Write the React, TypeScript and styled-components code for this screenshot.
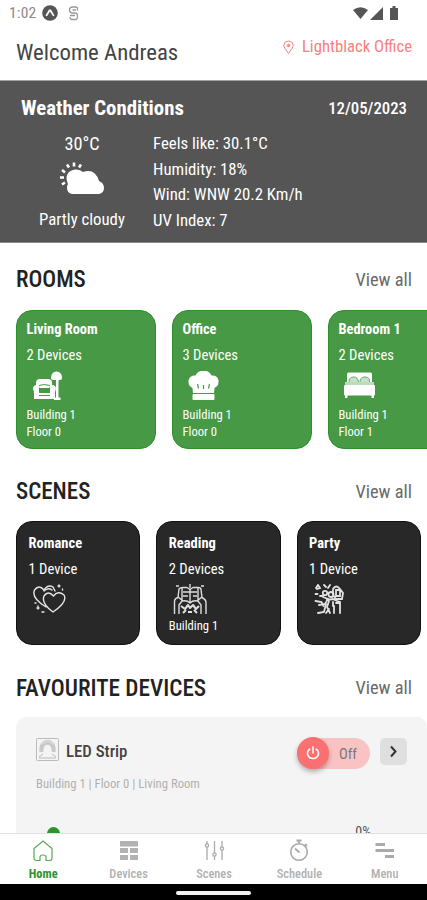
import React from 'react';
import styled, { createGlobalStyle } from 'styled-components';

const Global = createGlobalStyle`
  * { box-sizing: border-box; }
  html, body { margin: 0; padding: 0; background: #fff; overflow: hidden; }
  body { font-family: 'Roboto Condensed', Roboto, 'Liberation Sans', sans-serif; font-stretch: 75%; }
  svg { display: block; flex: none; }
`;

const Screen = styled.div`
  width: 427px;
  height: 900px;
  overflow: hidden;
  display: flex;
  flex-direction: column;
  background: #fff;
`;

type TextProps = { $size: number; $line: number; $weight?: number; $color?: string; $track?: number };

const Text = styled.span<TextProps>`
  display: block;
  white-space: nowrap;
  font-size: ${p => p.$size}px;
  line-height: ${p => p.$line}px;
  font-weight: ${p => p.$weight ?? 400};
  color: ${p => p.$color ?? '#fff'};
  letter-spacing: ${p => p.$track ?? 0}px;
`;

const StatusBar = styled.div`
  height: 26px;
  flex: none;
  display: flex;
  align-items: center;
  padding: 0 28px 0 9px;
`;

const StatusGroup = styled.div`
  display: flex;
  align-items: center;
  margin-left: auto;
`;

const AppDot = styled.div`
  margin: 0 10px 0 6px;
`;

const Header = styled.header`
  height: 55px;
  flex: none;
  display: flex;
  justify-content: space-between;
  align-items: flex-start;
  padding: 13px 15px 0 16px;
  border-bottom: 1px solid #a2a2a2;
`;

const Location = styled.div`
  display: flex;
  align-items: center;
  gap: 8px;
  margin-top: -2px;
`;

const Weather = styled.section`
  height: 162px;
  flex: none;
  background: #555;
  border-bottom: 1px solid #8d8d8d;
  padding: 13px 20px 0 21px;
`;

const WeatherTop = styled.div`
  display: flex;
  justify-content: space-between;
  align-items: center;
  height: 27px;
`;

const WeatherBody = styled.div`
  display: flex;
  padding-top: 10px;
`;

const Sky = styled.div`
  width: 122px;
  display: flex;
  flex-direction: column;
  align-items: center;
`;

const SkyIcon = styled.div`
  height: 49px;
  padding-top: 5px;
`;

const Readings = styled.div`
  padding-left: 10px;
`;

const Body = styled.main`
  flex: 1;
  min-height: 0;
  overflow: hidden;
`;

const SectionHead = styled.div<{ $height: number; $top: number }>`
  height: ${p => p.$height}px;
  display: flex;
  justify-content: space-between;
  align-items: center;
  padding: ${p => p.$top}px 15px 0 16px;
`;

const Cards = styled.div`
  display: flex;
  gap: 16px;
  padding-left: 16px;
`;

const RoomCard = styled.article`
  flex: none;
  width: 140px;
  height: 139px;
  padding: 9px 9.5px 0;
  border-radius: 16px;
  background: #489945;
  border: 1px solid #2c8f29;
`;

const SceneCard = styled.article`
  flex: none;
  width: 124.3px;
  height: 124px;
  padding: 12px 11.5px 0;
  border-radius: 16px;
  background: #282828;
  border: 1px solid #111;
`;

const IconSlot = styled.div<{ $height: number }>`
  height: ${p => p.$height}px;
  padding-left: 4px;
`;

const DeviceCard = styled.article`
  margin-left: 16px;
  height: 140px;
  background: #f4f4f4;
  border-radius: 10px;
  padding: 20px 20px 0;
`;

const DeviceRow = styled.div`
  display: flex;
  align-items: center;
  height: 32px;
`;

const DeviceName = styled.div`
  display: flex;
  align-items: center;
  gap: 7px;
  flex: 1;
  padding-bottom: 8px;
`;

const DeviceTitle = styled(Text)`
  padding-top: 3px;
`;

const Toggle = styled.div`
  width: 73px;
  height: 31px;
  border-radius: 16px;
  background: #f9c3c3;
  display: flex;
  align-items: center;
  gap: 10px;
`;

const ToggleLabel = styled(Text)`
  padding-top: 3px;
`;

const Knob = styled.div`
  width: 32px;
  height: 32px;
  border-radius: 50%;
  background: #fb7070;
  display: flex;
  align-items: center;
  justify-content: center;
  box-shadow: 0 3px 5px rgba(0, 0, 0, 0.28);
`;

const Arrow = styled.div`
  width: 27px;
  height: 27px;
  margin: 0 0 4px 10px;
  border-radius: 5px;
  background: #dfdfdf;
  display: flex;
  align-items: center;
  justify-content: center;
`;

const SliderRow = styled.div`
  display: flex;
  justify-content: space-between;
  padding: 26px 36px 0 11px;
`;

const SliderThumb = styled.div`
  width: 13px;
  height: 13px;
  margin-top: 3px;
  border-radius: 50%;
  background: #2f922f;
`;

const Nav = styled.nav`
  height: 51px;
  flex: none;
  display: grid;
  grid-template-columns: repeat(5, 1fr);
  background: #fff;
  border-top: 1px solid #e2e2e2;
`;

const NavItem = styled.div`
  display: flex;
  flex-direction: column;
  align-items: center;
  padding: 5px 0 0 1px;
  gap: 4px;
`;

const SystemBar = styled.div`
  height: 16px;
  flex: none;
  display: flex;
  justify-content: center;
  align-items: center;
  padding-top: 2px;
  background: #000;
`;

const HomePill = styled.div`
  width: 75px;
  height: 4px;
  border-radius: 2px;
  background: #f2f2f2;
`;

const Armchair = () => (
  <svg width="34" height="32" viewBox="0 0 34 32" fill="#fff">
    <path d="M5 12q0-4 4-4h8q4 0 4 4v3l-3 2H8l-3-2z" />
    <path d="M2 18q0-4 4-4 2 0 2.500 3v5h10v-5q.5-3 2.500-3 4 0 4 4-1 2-1 4v6H3v-6q0-2-1-4z" />
    <path d="M20 7q0-6 5.500-6.500Q31 1 31 7q0 2-2 2h-7q-2 0-2-2zM25 9h2.500v17.500h2V29H23v-2.500h2z" />
    <path d="M8 14.500q5-2 11 0M8.500 16.500v5h10v-5M8 24.500h11" stroke="#489945" fill="none" />
  </svg>
);

const ChefHat = () => (
  <svg width="34" height="32" viewBox="0 0 34 32" fill="#fff">
    <path d="M6 22l-.5-5Q1 15 1.500 9.500 3 4 8.500 4.500q2-5 8-5t8 5q6-.5 7 5 .5 5.500-4 7.500l-.5 5z" />
    <rect x="5.500" y="23" width="22" height="6" rx="1" />
    <path d="M10.500 13l1 4.500M16.500 14v4M22.500 13l-1 4.500" stroke="#489945" strokeWidth="1.200" />
  </svg>
);

const Bed = () => (
  <svg width="34" height="32" viewBox="0 0 34 32" fill="#fff">
    <path d="M4 3q0-1.500 1.500-1.500h22Q29 1.500 29 3v9H4z" />
    <path d="M6 11q0-5 4.500-5t5 5M17 11q0-5 5-5t4.500 5" fill="#c9e0c8" stroke="#6aac68" />
    <rect x="2" y="11" width="29" height="3" fill="#bddabc" />
    <rect x="1" y="14" width="31" height="10.500" rx="1" />
    <path d="M2 24h2.500v3H2zM28.500 24H31v3h-2.500z" />
  </svg>
);

const Hearts = () => (
  <svg width="34" height="32" viewBox="0 0 34 32" fill="none" stroke="#e6e6e6" strokeWidth="1.400" strokeLinecap="round">
    <path d="M20 28Q8 19 11 12q4-6 9.500 0Q25 6 31 11q4 7-11 17z" />
    <path d="M13 23Q-2 14 1.500 6 6 0 11 6q4-6 9-3l2 4" />
    <path d="M11 7q4-4 8-1" />
    <path d="M26 1v2M25 2h2M29.500 5v1M5 22v3M4 24h2M9 28h2M2 19h1" />
  </svg>
);

const ReadingIcon = () => (
  <svg width="34" height="32" viewBox="0 0 34 32" fill="none" stroke="#dedede" strokeWidth="1.400" strokeLinejoin="round">
    <path d="M1.500 30V17.500q0-3 3.500-4L6 5q1-1.500 4-1.500h4l3 2 3-2h5q3 0 3 2l1 8q4 2 4 5V30" />
    <path d="M6 30v-9l3-4M28 30v-9l-3-4M9 4v13q5-1 8 2 3-3 8-2V4M17 5v14M5 13l5 4M29 13l-5 4" />
    <path d="M10 8h14M10 12h5M20 12h4M3 2h3M28 2h3M17 0v4" />
    <path d="M8 22l4 3 3-4 2 3 3-3 3 4 3-3M10 29l3-3M24 29l-3-3M15 28h4" strokeWidth="2.100" />
  </svg>
);

const PartyIcon = () => (
  <svg width="34" height="32" viewBox="0 0 34 32" fill="none" stroke="#e2e2e2" strokeWidth="1.800" strokeLinecap="round">
    <path d="M3 4l2-3 2 3-3 1zM2.500 10h2M11 1l2 2M17 1l-2 3M2.500 17l6 1 2 4M10 13l5 2-3 5-6 1M5 29l6-1 2-8M7 12h3" />
    <circle cx="12" cy="9" r="2.200" />
    <circle cx="18" cy="10.500" r="2.500" />
    <path d="M20 5q3-5 7 0l3 4-1 6h-6l-3-4zM23 6h4v6h-4zM14 16l6-1 4 2 3 1v11M16 17l-2 6 3 6M20 18v4M21 22v7M23 19h3M13 29l3-4" />
  </svg>
);

const rooms = [
  { name: 'Living Room', count: '2 Devices', building: 'Building 1', floor: 'Floor 0', Icon: Armchair },
  { name: 'Office', count: '3 Devices', building: 'Building 1', floor: 'Floor 0', Icon: ChefHat },
  { name: 'Bedroom 1', count: '2 Devices', building: 'Building 1', floor: 'Floor 1', Icon: Bed },
];

const scenes = [
  { name: 'Romance', count: '1 Device', building: '', Icon: Hearts },
  { name: 'Reading', count: '2 Devices', building: 'Building 1', Icon: ReadingIcon },
  { name: 'Party', count: '1 Device', building: '', Icon: PartyIcon },
];

const NavIcon = ({ children }: { children: React.ReactNode }) => (
  <svg width="24" height="24" viewBox="0 0 24 24" fill="none" stroke="#aaa" strokeWidth="1.300">{children}</svg>
);

const tabs = [
  {
    label: 'Home', active: true,
    icon: <path d="M9 21.500H5.500q-2.500 0-2.500-2.500V9.500L12 2l9 7.500V19q0 2.500-2.500 2.500H15V18q0-2-3-2t-3 2z" stroke="#5ba659" strokeWidth="1.200" />,
  },
  {
    label: 'Devices', active: false,
    icon: <path d="M3 2h18v5.500H3zM3 9h8v5H3zM13 9h8v5h-8zM3 16h8v5H3zM13 16h8v5h-8z" fill="#b2b2b2" stroke="none" />,
  },
  {
    label: 'Scenes', active: false,
    icon: <><path d="M5 2v3M5 8v13M12.500 2v12M12.500 17v4M20 2v6M20 11v10" /><circle cx="5" cy="6.500" r="1.600" /><circle cx="12.500" cy="15.500" r="1.600" /><circle cx="20" cy="9.500" r="1.600" /></>,
  },
  {
    label: 'Schedule', active: false,
    icon: <><circle cx="12" cy="13" r="8.300" strokeWidth="1.600" /><path d="M9.500 1.500h5M12 2v3M18 5l2 2M8 9.500l4.500 4" strokeWidth="1.800" /></>,
  },
  {
    label: 'Menu', active: false,
    icon: <path d="M2.500 5.500H12M2.500 11.500H21M12 17.500h9" strokeWidth="3" />,
  },
];

export default function App() {
  return (
    <Screen>
      <Global />
      <StatusBar>
        <Text $size={15.5} $line={24} $color="#8a8a8a" $track={0.2}>1:02</Text>
        <AppDot>
          <svg width="16" height="16" viewBox="0 0 16 16">
            <circle cx="8" cy="8" r="7.800" fill="#555" />
            <path d="M3.500 10.500q1 1.500 2 0L8 6.500l2.500 4q1 1.500 2 0L9 4.500H7z" fill="#fff" />
          </svg>
        </AppDot>
        <svg width="11" height="15" viewBox="0 0 11 15" fill="none" stroke="#999" strokeWidth="1.300">
          <path d="M9.500 4.500V2.500q0-1.500-2-1.500H4Q1.500 1.500 1.500 4T4 7h3q2.500 0 2.500 3.500T6.500 13.500H4q-2 0-2-2.500M4.500 4H8M2 9.500h5" />
        </svg>
        <StatusGroup>
          <svg width="17" height="13" viewBox="0 0 17 13"><path d="M0 3q7.500-5.500 15 0L7.500 12z" fill="#555" /></svg>
          <svg width="20" height="13" viewBox="0 0 20 13"><path d="M13 0v13H0z" fill="#555" /></svg>
          <svg width="9" height="14" viewBox="0 0 9 14"><path d="M0 2h2.500V0h3v2H8v12H0z" fill="#555" /></svg>
        </StatusGroup>
      </StatusBar>

      <Header>
        <Text $size={22.8} $line={28} $color="#444">Welcome Andreas</Text>
        <Location>
          <svg width="11" height="15" viewBox="0 0 11 15" fill="none" stroke="#f98080">
            <path d="M5.500 13.500L2 8.500Q.5 6 .8 5 1.500 1 5.500 1t4.700 4q.3 1-1.200 3.500z" />
            <circle cx="5.500" cy="5.500" r="1.200" fill="#f98080" />
          </svg>
          <Text $size={16.7} $line={20} $color="#f98080">Lightblack Office</Text>
        </Location>
      </Header>

      <Weather>
        <WeatherTop>
          <Text $size={20.8} $line={26} $weight={700}>Weather Conditions</Text>
          <Text $size={16.8} $line={24} $weight={500}>12/05/2023</Text>
        </WeatherTop>
        <WeatherBody>
          <Sky>
            <Text $size={18.3} $line={26}>30°C</Text>
            <SkyIcon>
              <svg width="44" height="34" viewBox="0 0 44 34">
                <path d="M12 32q-5-1-5-6 0-3 1-4Q3 10 15 7.500q5-.5 8 2.500 12-4 16 9 5 2 5 7 0 5-5 6z" fill="#fff" />
                <path d="M14 .5v4M7 2.500l2 3M21 2.500l-2 3M2 8l3 2.500M0 15.500h4M2 22.500l3-2" stroke="#fff" strokeWidth="2.600" />
              </svg>
            </SkyIcon>
            <Text $size={16.8} $line={26}>Partly cloudy</Text>
          </Sky>
          <Readings>
            <Text $size={16.8} $line={25.5}>Feels like: 30.1°C</Text>
            <Text $size={16.8} $line={25.5}>Humidity: 18%</Text>
            <Text $size={16.8} $line={25.5}>Wind: WNW 20.2 Km/h</Text>
            <Text $size={16.8} $line={25.5}>UV Index: 7</Text>
          </Readings>
        </WeatherBody>
      </Weather>

      <Body>
        <SectionHead $height={67} $top={7}>
          <Text $size={23} $line={28} $weight={500} $color="#222">ROOMS</Text>
          <Text $size={18.4} $line={26} $color="#6a6a6a">View all</Text>
        </SectionHead>
        <Cards>
          {rooms.map(({ name, count, building, floor, Icon }) => (
            <RoomCard key={name}>
              <Text $size={14.4} $line={20} $weight={700}>{name}</Text>
              <Text $size={14.6} $line={31}>{count}</Text>
              <IconSlot $height={34.5}><Icon /></IconSlot>
              <Text $size={12.6} $line={17}>{building}</Text>
              <Text $size={12.6} $line={17}>{floor}</Text>
            </RoomCard>
          ))}
        </Cards>
        <SectionHead $height={72} $top={13}>
          <Text $size={23} $line={28} $weight={500} $color="#222">SCENES</Text>
          <Text $size={18.4} $line={26} $color="#6a6a6a">View all</Text>
        </SectionHead>
        <Cards>
          {scenes.map(({ name, count, building, Icon }) => (
            <SceneCard key={name}>
              <Text $size={14.5} $line={20} $weight={700}>{name}</Text>
              <Text $size={14.6} $line={30}>{count}</Text>
              <IconSlot $height={33}><Icon /></IconSlot>
              <Text $size={12.6} $line={17}>{building}</Text>
            </SceneCard>
          ))}
        </Cards>
        <SectionHead $height={72} $top={13}>
          <Text $size={23.2} $line={28} $weight={500} $color="#222">FAVOURITE DEVICES</Text>
          <Text $size={18.4} $line={26} $color="#6a6a6a">View all</Text>
        </SectionHead>
        <DeviceCard>
          <DeviceRow>
            <DeviceName>
              <svg width="23" height="23" viewBox="0 0 23 23" fill="none" stroke="#bbb">
                <rect x=".5" y=".5" width="22" height="22" rx="1" />
                <path d="M6 14q-1-8 5.500-9 6.500 1 5.500 9" strokeWidth="3" stroke="#c9c9c9" />
                <path d="M3 19l4-3M20 19l-4-3M3 20h17M4 14q-1-11 7.500-11.500Q20 3 19 14" />
              </svg>
              <DeviceTitle $size={16.8} $line={22} $weight={500} $color="#444">LED Strip</DeviceTitle>
            </DeviceName>
            <Toggle>
              <Knob>
                <svg width="14" height="14" viewBox="0 0 14 14" fill="none" stroke="#fff" strokeWidth="1.500" strokeLinecap="round">
                  <path d="M7 1v6M3.800 3.200Q1.200 5 1.500 8q1 4.500 5.500 4.500T12.500 8q.3-3-2.300-4.800" />
                </svg>
              </Knob>
              <ToggleLabel $size={14.5} $line={20} $color="#777">Off</ToggleLabel>
            </Toggle>
            <Arrow>
              <svg width="9" height="13" viewBox="0 0 9 13" fill="none" stroke="#333" strokeWidth="2"><path d="M2 1.500l4.500 5L2 11.500" /></svg>
            </Arrow>
          </DeviceRow>
          <Text $size={12.7} $line={29} $color="#b0b0b0">Building 1 | Floor 0 | Living Room</Text>
          <SliderRow>
            <SliderThumb />
            <Text $size={14} $line={17} $color="#555">0%</Text>
          </SliderRow>
        </DeviceCard>
      </Body>

      <Nav>
        {tabs.map(t => (
          <NavItem key={t.label}>
            <NavIcon>{t.icon}</NavIcon>
            <Text $size={12.4} $line={14} $weight={t.active ? 700 : 500} $color={t.active ? '#2f922f' : '#b0b0b0'}>{t.label}</Text>
          </NavItem>
        ))}
      </Nav>
      <SystemBar><HomePill /></SystemBar>
    </Screen>
  );
}
